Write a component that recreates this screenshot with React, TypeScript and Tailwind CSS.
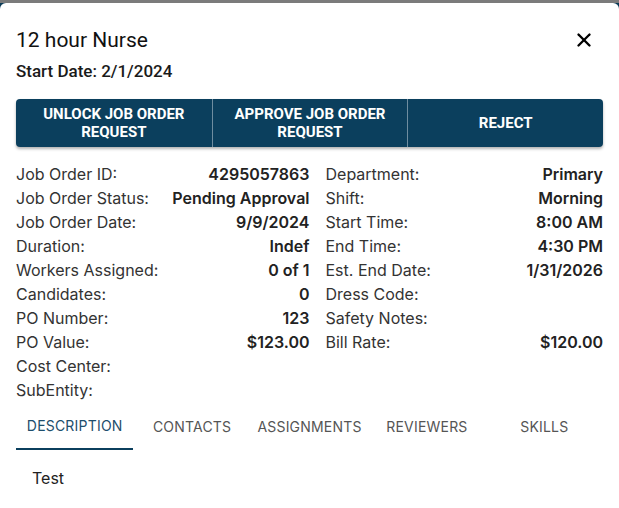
import { X } from 'lucide-react'

const left: [string, string][] = [
  ['Job Order ID:', '4295057863'],
  ['Job Order Status:', 'Pending Approval'],
  ['Job Order Date:', '9/9/2024'],
  ['Duration:', 'Indef'],
  ['Workers Assigned:', '0 of 1'],
  ['Candidates:', '0'],
  ['PO Number:', '123'],
  ['PO Value:', '$123.00'],
  ['Cost Center:', ''],
  ['SubEntity:', ''],
]

const right: [string, string][] = [
  ['Department:', 'Primary'],
  ['Shift:', 'Morning'],
  ['Start Time:', '8:00 AM'],
  ['End Time:', '4:30 PM'],
  ['Est. End Date:', '1/31/2026'],
  ['Dress Code:', ''],
  ['Safety Notes:', ''],
  ['Bill Rate:', '$120.00'],
]

const tabs = ['DESCRIPTION', 'CONTACTS', 'ASSIGNMENTS', 'REVIEWERS', 'SKILLS']

function Rows({ rows, className = '' }: { rows: [string, string][]; className?: string }) {
  return (
    <div className={`flex flex-col ${className}`}>
      {rows.map(([k, v]) => (
        <div key={k} className="flex justify-between h-6 items-center">
          <span className="text-[#333]">{k}</span>
          <span className="font-semibold text-[#222]">{v}</span>
        </div>
      ))}
    </div>
  )
}

export default function App() {
  return (
    <div className="w-[619px] h-[508px] bg-[#0b3b57] overflow-hidden" style={{ fontFamily: 'Inter, sans-serif' }}>
      <div className="h-[3px] bg-[#7b7b7b]" />
      <div className="bg-white rounded-t-md h-[505px] px-4">
        <div className="flex items-center justify-between pt-[23px]">
          <h1 className="text-[21px] text-[#111] leading-7" style={{ fontFamily: 'Roboto, sans-serif' }}>12 hour Nurse</h1>
          <X size={22} strokeWidth={2.6} className="text-black mr-[8px]" />
        </div>
        <div className="mt-[5px] text-[17px] font-medium text-[#1a1a1a] leading-6" style={{ fontFamily: 'Roboto, sans-serif' }}>
          Start Date: 2/1/2024
        </div>
        <div
          className="mt-4 grid grid-cols-3 h-12 rounded-[4px] bg-[#0b3f5d] shadow-[0_2px_3px_rgba(0,0,0,0.3)] overflow-hidden"
          style={{ fontFamily: 'Roboto, sans-serif' }}
        >
          {['UNLOCK JOB ORDER REQUEST', 'APPROVE JOB ORDER REQUEST', 'REJECT'].map((t, i) => (
            <div
              key={t}
              className={`flex items-center justify-center text-center text-white text-[15px] font-bold leading-[18px] px-2 ${i > 0 ? 'border-l border-[#6f8da0]' : ''}`}
            >
              {t}
            </div>
          ))}
        </div>
        <div className="mt-[15px] grid grid-cols-2 text-[16px]">
          <Rows rows={left} />
          <Rows rows={right} className="pl-4" />
        </div>
        <div className="flex h-12 text-[14px]">
          {tabs.map((t, i) => (
            <div
              key={t}
              className={`flex-1 flex items-center justify-center tracking-[0.2px] ${i === 0 ? 'text-[#1d4e6c] border-b-2 border-[#0b3f5d]' : 'text-[#555]'}`}
            >
              {t}
            </div>
          ))}
        </div>
        <div className="pl-4 pt-4 text-[16px] leading-6 text-[#222]">Test</div>
      </div>
    </div>
  )
}
